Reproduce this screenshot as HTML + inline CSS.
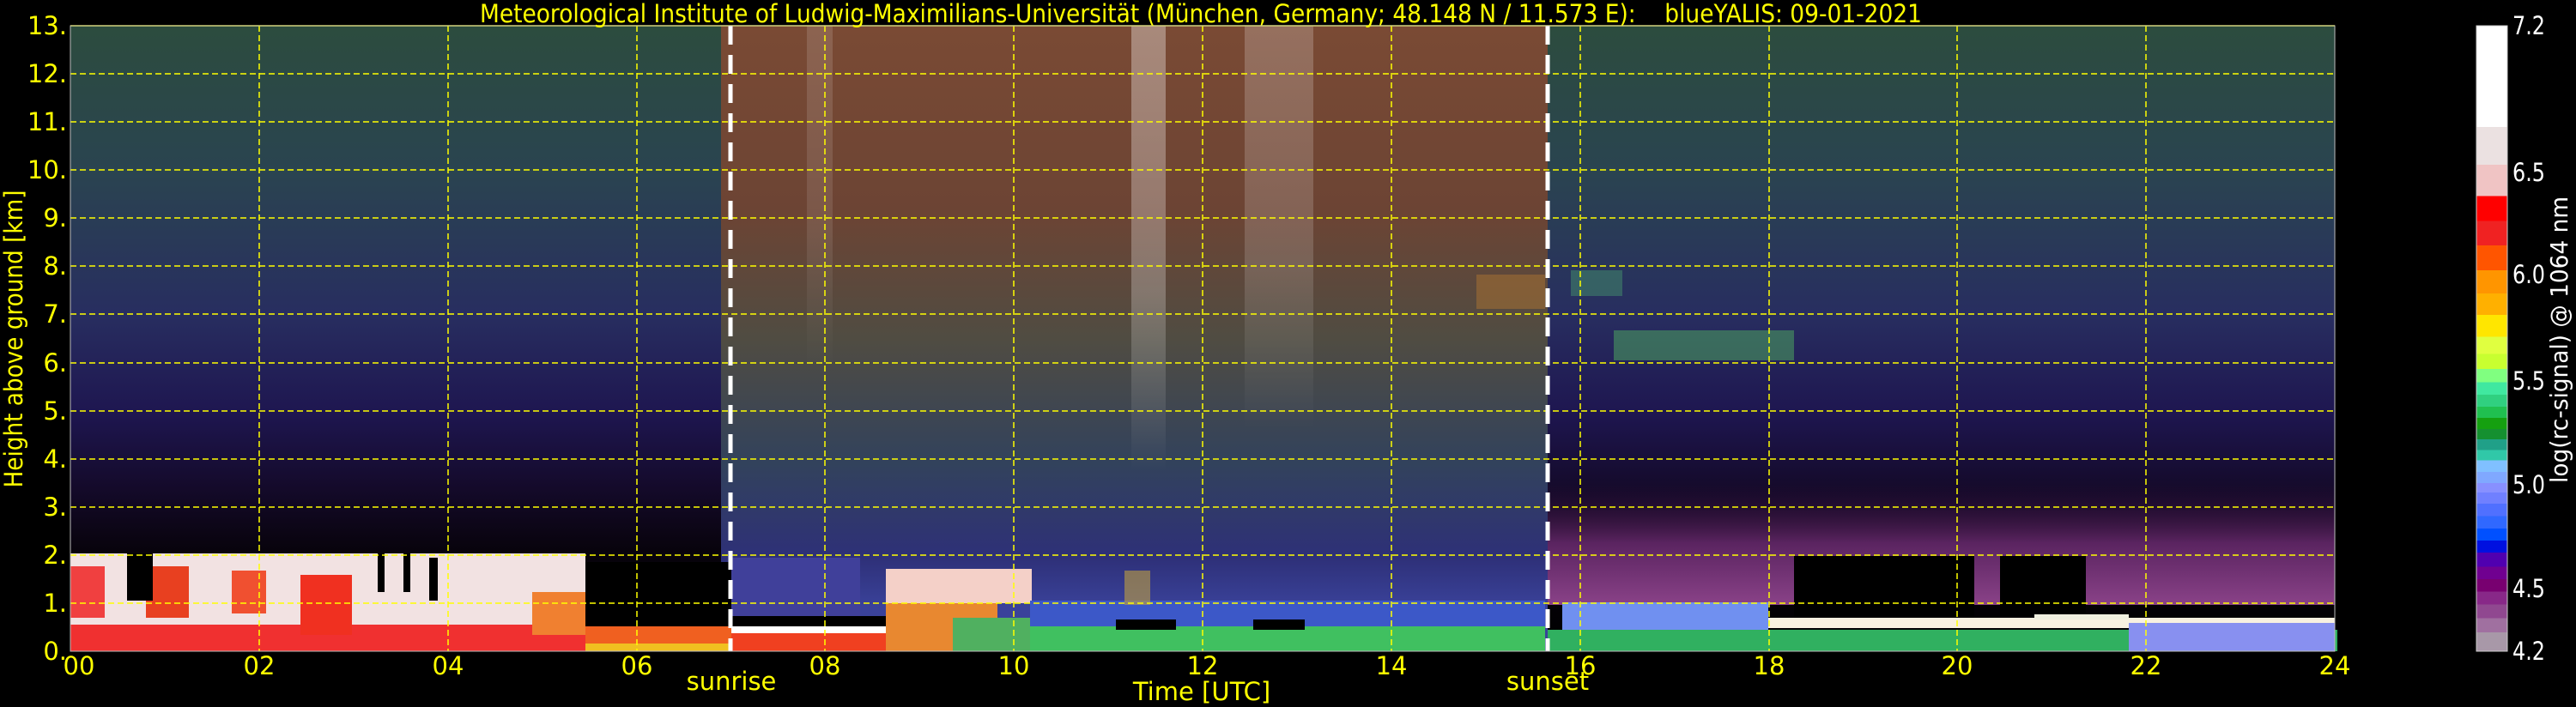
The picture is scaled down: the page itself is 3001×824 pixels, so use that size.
<!DOCTYPE html>
<html><head><meta charset="utf-8"><style>
html,body{margin:0;padding:0;background:#000;}
svg{display:block;}
text{font-family:"DejaVu Sans","Liberation Sans",sans-serif;}
</style></head><body>
<svg width="3001" height="824" viewBox="0 0 3001 824" xmlns="http://www.w3.org/2000/svg">
<defs>
<linearGradient id="night" x1="0" y1="30" x2="0" y2="759" gradientUnits="userSpaceOnUse">
<stop offset="0" stop-color="#2c4c3e"/>
<stop offset="0.23" stop-color="#2a4450"/>
<stop offset="0.46" stop-color="#282e60"/>
<stop offset="0.62" stop-color="#1e1650"/>
<stop offset="0.74" stop-color="#140a2a"/>
<stop offset="0.84" stop-color="#08030c"/>
<stop offset="1" stop-color="#000"/>
</linearGradient>
<linearGradient id="day" x1="0" y1="30" x2="0" y2="759" gradientUnits="userSpaceOnUse">
<stop offset="0" stop-color="#7a4a34"/>
<stop offset="0.3" stop-color="#6c4434"/>
<stop offset="0.5" stop-color="#504c42"/>
<stop offset="0.7" stop-color="#32425c"/>
<stop offset="0.85" stop-color="#2e3078"/>
<stop offset="0.93" stop-color="#3a429a"/>
<stop offset="1" stop-color="#3a4498"/>
</linearGradient>
<linearGradient id="haze" x1="0" y1="560" x2="0" y2="705" gradientUnits="userSpaceOnUse">
<stop offset="0" stop-color="#2a0c38" stop-opacity="0"/>
<stop offset="0.5" stop-color="#5a2460"/>
<stop offset="1" stop-color="#8a4288"/>
</linearGradient>
<linearGradient id="white" x1="0" y1="0" x2="0" y2="1">
<stop offset="0" stop-color="#ffffff" stop-opacity="0.35"/>
<stop offset="0.6" stop-color="#ffffff" stop-opacity="0.25"/>
<stop offset="1" stop-color="#ffffff" stop-opacity="0"/>
</linearGradient>
<linearGradient id="cb" x1="0" y1="30" x2="0" y2="759" gradientUnits="userSpaceOnUse">
<stop offset="0" stop-color="#ffffff"/><stop offset="0.162" stop-color="#ffffff"/>
<stop offset="0.162" stop-color="#ebe1e1"/><stop offset="0.222" stop-color="#ebe1e1"/>
<stop offset="0.222" stop-color="#f0c4c4"/><stop offset="0.272" stop-color="#f0c4c4"/>
<stop offset="0.272" stop-color="#ff0000"/><stop offset="0.312" stop-color="#ff0000"/>
<stop offset="0.312" stop-color="#f02222"/><stop offset="0.351" stop-color="#f02222"/>
<stop offset="0.351" stop-color="#ff5500"/><stop offset="0.391" stop-color="#ff5500"/>
<stop offset="0.391" stop-color="#ff9500"/><stop offset="0.428" stop-color="#ff9500"/>
<stop offset="0.428" stop-color="#ffb000"/><stop offset="0.462" stop-color="#ffb000"/>
<stop offset="0.462" stop-color="#ffe600"/><stop offset="0.497" stop-color="#ffe600"/>
<stop offset="0.497" stop-color="#e0ff40"/><stop offset="0.525" stop-color="#e0ff40"/>
<stop offset="0.525" stop-color="#c8ff30"/><stop offset="0.549" stop-color="#c8ff30"/>
<stop offset="0.549" stop-color="#80ff80"/><stop offset="0.570" stop-color="#80ff80"/>
<stop offset="0.570" stop-color="#40e8a0"/><stop offset="0.590" stop-color="#40e8a0"/>
<stop offset="0.590" stop-color="#30d080"/><stop offset="0.609" stop-color="#30d080"/>
<stop offset="0.609" stop-color="#20c050"/><stop offset="0.627" stop-color="#20c050"/>
<stop offset="0.627" stop-color="#15a010"/><stop offset="0.645" stop-color="#15a010"/>
<stop offset="0.645" stop-color="#159030"/><stop offset="0.661" stop-color="#159030"/>
<stop offset="0.661" stop-color="#20a088"/><stop offset="0.678" stop-color="#20a088"/>
<stop offset="0.678" stop-color="#30c8a8"/><stop offset="0.695" stop-color="#30c8a8"/>
<stop offset="0.695" stop-color="#80c0ff"/><stop offset="0.713" stop-color="#80c0ff"/>
<stop offset="0.713" stop-color="#80a8ff"/><stop offset="0.731" stop-color="#80a8ff"/>
<stop offset="0.731" stop-color="#8890ff"/><stop offset="0.746" stop-color="#8890ff"/>
<stop offset="0.746" stop-color="#7080ff"/><stop offset="0.764" stop-color="#7080ff"/>
<stop offset="0.764" stop-color="#5070ff"/><stop offset="0.784" stop-color="#5070ff"/>
<stop offset="0.784" stop-color="#3068ff"/><stop offset="0.804" stop-color="#3068ff"/>
<stop offset="0.804" stop-color="#0050ff"/><stop offset="0.823" stop-color="#0050ff"/>
<stop offset="0.823" stop-color="#0010e0"/><stop offset="0.842" stop-color="#0010e0"/>
<stop offset="0.842" stop-color="#5000b0"/><stop offset="0.865" stop-color="#5000b0"/>
<stop offset="0.865" stop-color="#700090"/><stop offset="0.885" stop-color="#700090"/>
<stop offset="0.885" stop-color="#780070"/><stop offset="0.905" stop-color="#780070"/>
<stop offset="0.905" stop-color="#882888"/><stop offset="0.925" stop-color="#882888"/>
<stop offset="0.925" stop-color="#904890"/><stop offset="0.947" stop-color="#904890"/>
<stop offset="0.947" stop-color="#a070a0"/><stop offset="0.970" stop-color="#a070a0"/>
<stop offset="0.970" stop-color="#a898a8"/><stop offset="1" stop-color="#a898a8"/>
</linearGradient>
</defs>

<rect x="82" y="30" width="2638" height="729" fill="url(#night)"/>
<rect x="840" y="30" width="963" height="729" fill="url(#day)"/>
<rect x="1318" y="30" width="40" height="520" fill="url(#white)"/>
<rect x="1450" y="30" width="80" height="470" fill="url(#white)" opacity="0.6"/>
<rect x="940" y="30" width="30" height="400" fill="url(#white)" opacity="0.4"/>

<rect x="82" y="645" width="600" height="114" fill="#f2e2e2"/>
<rect x="82" y="728" width="600" height="31" fill="#f03030"/>
<rect x="82" y="660" width="40" height="60" fill="#f04040"/>
<rect x="170" y="660" width="50" height="60" fill="#e84020"/>
<rect x="270" y="665" width="40" height="50" fill="#f05030"/>
<rect x="350" y="670" width="60" height="70" fill="#f03020"/>
<rect x="148" y="645" width="30" height="55" fill="#000"/>
<rect x="440" y="645" width="8" height="45" fill="#000"/>
<rect x="470" y="645" width="8" height="45" fill="#000"/>
<rect x="500" y="650" width="10" height="50" fill="#000"/>
<rect x="620" y="690" width="62" height="50" fill="#f08030"/>
<rect x="682" y="655" width="170" height="75" fill="#000"/>
<rect x="682" y="730" width="170" height="29" fill="#f06020"/>
<rect x="682" y="750" width="170" height="9" fill="#f0c020"/>

<rect x="852" y="650" width="150" height="78" fill="#40409a"/>
<rect x="852" y="718" width="180" height="12" fill="#000"/>
<rect x="852" y="730" width="180" height="8" fill="#ffffff"/>
<rect x="852" y="738" width="180" height="21" fill="#f04020"/>
<rect x="1032" y="663" width="170" height="40" fill="#f4d0c8"/>
<rect x="1032" y="703" width="130" height="56" fill="#e88830"/>
<rect x="1110" y="720" width="90" height="39" fill="#50b060"/>
<rect x="1200" y="700" width="600" height="30" fill="#3c58c8"/>
<rect x="1200" y="730" width="600" height="29" fill="#40c060"/>
<rect x="1300" y="722" width="70" height="12" fill="#000"/>
<rect x="1460" y="722" width="60" height="12" fill="#000"/>
<rect x="1310" y="665" width="30" height="40" fill="#c0a040" opacity="0.6"/>

<rect x="1803" y="560" width="917" height="145" fill="url(#haze)"/>
<rect x="1820" y="702" width="240" height="32" fill="#7090f0"/>
<rect x="1803" y="734" width="920" height="25" fill="#30b060"/>
<rect x="2090" y="648" width="210" height="83" fill="#000"/>
<rect x="2330" y="648" width="100" height="70" fill="#000"/>
<rect x="2060" y="720" width="660" height="12" fill="#f8f0e0"/>
<rect x="2480" y="726" width="240" height="33" fill="#8890f0"/>
<rect x="2370" y="716" width="110" height="6" fill="#f0f0e0"/>
<rect x="1880" y="385" width="210" height="35" fill="#50b060" opacity="0.5"/>
<rect x="1830" y="315" width="60" height="30" fill="#4aa870" opacity="0.4"/>
<rect x="1720" y="320" width="80" height="40" fill="#c08030" opacity="0.4"/>

<g stroke="#ffff00" stroke-width="1.5" stroke-dasharray="7,4" fill="none">
<line x1="82" y1="86" x2="2720" y2="86"/><line x1="82" y1="142" x2="2720" y2="142"/>
<line x1="82" y1="198" x2="2720" y2="198"/><line x1="82" y1="254" x2="2720" y2="254"/>
<line x1="82" y1="310" x2="2720" y2="310"/><line x1="82" y1="366" x2="2720" y2="366"/>
<line x1="82" y1="423" x2="2720" y2="423"/><line x1="82" y1="479" x2="2720" y2="479"/>
<line x1="82" y1="535" x2="2720" y2="535"/><line x1="82" y1="591" x2="2720" y2="591"/>
<line x1="82" y1="647" x2="2720" y2="647"/><line x1="82" y1="703" x2="2720" y2="703"/>
<line x1="302" y1="30" x2="302" y2="759"/><line x1="522" y1="30" x2="522" y2="759"/>
<line x1="742" y1="30" x2="742" y2="759"/><line x1="961" y1="30" x2="961" y2="759"/>
<line x1="1181" y1="30" x2="1181" y2="759"/><line x1="1401" y1="30" x2="1401" y2="759"/>
<line x1="1621" y1="30" x2="1621" y2="759"/><line x1="1841" y1="30" x2="1841" y2="759"/>
<line x1="2061" y1="30" x2="2061" y2="759"/><line x1="2280" y1="30" x2="2280" y2="759"/>
<line x1="2500" y1="30" x2="2500" y2="759"/>
</g>
<line x1="82" y1="30" x2="2720" y2="30" stroke="#ffff00" stroke-width="1.5"/>
<g stroke="#ffffff" stroke-width="5" stroke-dasharray="22,12">
<line x1="851" y1="30" x2="851" y2="759"/>
<line x1="1803" y1="30" x2="1803" y2="759"/>
</g>
<rect x="82" y="30" width="2638" height="729" fill="none" stroke="#bbbbbb" stroke-width="1"/>

<text x="559" y="26" fill="#ffff00" font-size="29" textLength="1680" lengthAdjust="spacingAndGlyphs">Meteorological Institute of Ludwig-Maximilians-Universität (München, Germany; 48.148 N / 11.573 E):&#160;&#160;&#160; blueYALIS: 09-01-2021</text>

<g fill="#ffff00" font-size="29" text-anchor="end">
<text x="78" y="40">13.</text><text x="78" y="96">12.</text><text x="78" y="152">11.</text>
<text x="78" y="208">10.</text><text x="78" y="264">9.</text><text x="78" y="320">8.</text>
<text x="78" y="376">7.</text><text x="78" y="433">6.</text><text x="78" y="489">5.</text>
<text x="78" y="545">4.</text><text x="78" y="601">3.</text><text x="78" y="657">2.</text>
<text x="78" y="713">1.</text><text x="78" y="769">0.</text>
</g>
<text transform="translate(26,395) rotate(-90)" fill="#ffff00" font-size="29" text-anchor="middle" textLength="347" lengthAdjust="spacingAndGlyphs">Height above ground [km]</text>

<g fill="#ffff00" font-size="29" text-anchor="middle">
<text x="92" y="786">00</text><text x="302" y="786">02</text><text x="522" y="786">04</text>
<text x="742" y="786">06</text><text x="961" y="786">08</text><text x="1181" y="786">10</text>
<text x="1401" y="786">12</text><text x="1621" y="786">14</text><text x="1841" y="786">16</text>
<text x="2061" y="786">18</text><text x="2280" y="786">20</text><text x="2500" y="786">22</text>
<text x="2720" y="786">24</text>
<text x="852" y="804">sunrise</text>
<text x="1803" y="804">sunset</text>
<text x="1400" y="816">Time [UTC]</text>
</g>

<rect x="2885" y="30" width="36" height="729" fill="url(#cb)" stroke="#cccccc" stroke-width="1"/>
<g fill="#ffffff" font-size="29">
<text x="2927" y="40" textLength="38" lengthAdjust="spacingAndGlyphs">7.2</text>
<text x="2927" y="211" textLength="38" lengthAdjust="spacingAndGlyphs">6.5</text>
<text x="2927" y="330" textLength="38" lengthAdjust="spacingAndGlyphs">6.0</text>
<text x="2927" y="454" textLength="38" lengthAdjust="spacingAndGlyphs">5.5</text>
<text x="2927" y="575" textLength="38" lengthAdjust="spacingAndGlyphs">5.0</text>
<text x="2927" y="696" textLength="38" lengthAdjust="spacingAndGlyphs">4.5</text>
<text x="2927" y="769" textLength="38" lengthAdjust="spacingAndGlyphs">4.2</text>
</g>
<text transform="translate(2991,396) rotate(-90)" fill="#ffffff" font-size="28" text-anchor="middle" textLength="334" lengthAdjust="spacingAndGlyphs">log(rc-signal) @ 1064 nm</text>
</svg>
</body></html>
